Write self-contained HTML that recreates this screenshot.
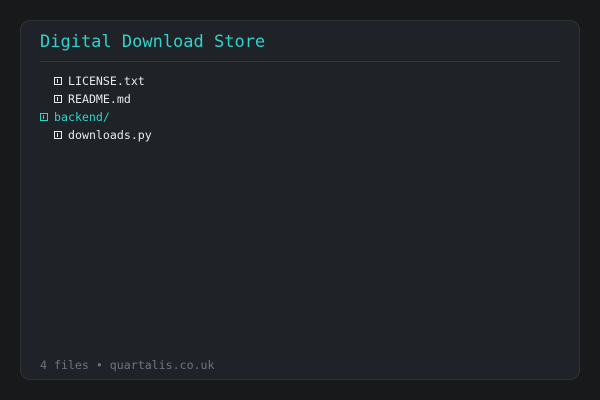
<!DOCTYPE html>
<html><head><meta charset="utf-8"><style>
html,body{margin:0;padding:0;background:#18191b;width:600px;height:400px;overflow:hidden}
.card{position:absolute;left:20px;top:20px;width:558px;height:358px;background:#1f2226;border:1px solid #2e3237;border-radius:10px}
.mono{font-family:"DejaVu Sans Mono","Liberation Mono",monospace}
.title{position:absolute;left:19px;top:11px;font-size:17px;color:#2fd3cc;white-space:nowrap}
.hr{position:absolute;left:19px;right:19px;top:40px;height:1px;background:#32363b}
.row{position:absolute;font-size:11.6px;color:#e6e8ea;white-space:nowrap;line-height:18px}
.ic{display:inline-block;width:6px;height:6px;border:1px solid currentColor;margin-right:6px;vertical-align:0px;position:relative}
.ic:after{content:"";position:absolute;left:2px;top:1px;width:1px;height:4px;background:currentColor}
.teal{color:#2fd3cc}
.foot{position:absolute;left:19px;top:337px;font-size:11.6px;color:#70757b;white-space:nowrap}
</style></head><body>
<div class="card mono">
<div class="title">Digital Download Store</div>
<div class="hr"></div>
<div class="row" style="left:33px;top:51px"><span class="ic"></span>LICENSE.txt</div>
<div class="row" style="left:33px;top:69px"><span class="ic"></span>README.md</div>
<div class="row teal" style="left:19px;top:87px"><span class="ic"></span>backend/</div>
<div class="row" style="left:33px;top:105px"><span class="ic"></span>downloads.py</div>
<div class="foot">4 files • quartalis.co.uk</div>
</div>
</body></html>
